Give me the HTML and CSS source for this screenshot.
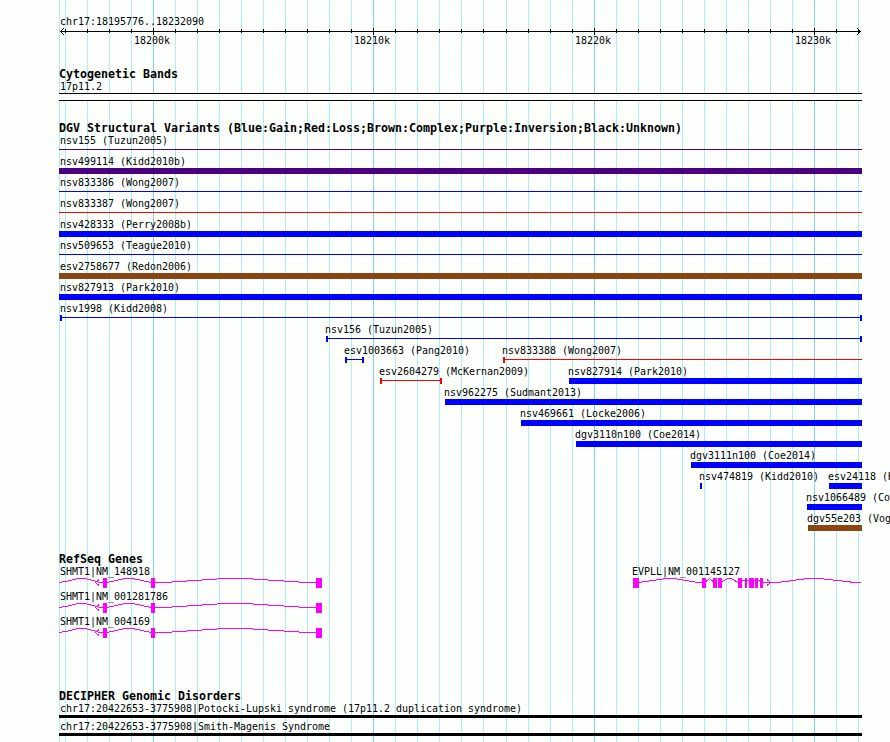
FILE: index.html
```html
<!DOCTYPE html>
<html lang="en">
<head>
  <meta charset="UTF-8" />
  <title>chr17:18195776..18232090</title>
  <link rel="stylesheet" href="styles.css">
</head>
<body>
  <main class="browser">
    <svg class="grid" viewBox="59 0 803 742">
      <path class="minor" d="M59.5 0V742M65.5 0V742M87.5 0V742M109.5 0V742M131.5 0V742M175.5 0V742M197.5 0V742M219.5 0V742M241.5 0V742M263.5 0V742M285.5 0V742M307.5 0V742M329.5 0V742M351.5 0V742M395.5 0V742M417.5 0V742M439.5 0V742M461.5 0V742M483.5 0V742M506.5 0V742M528.5 0V742M550.5 0V742M572.5 0V742M616.5 0V742M638.5 0V742M660.5 0V742M682.5 0V742M704.5 0V742M726.5 0V742M748.5 0V742M770.5 0V742M792.5 0V742M836.5 0V742M858.5 0V742" />
      <path class="major" d="M153.5 0V742M373.5 0V742M594.5 0V742M814.5 0V742" />
    </svg>

    <header class="ruler">
      <div class="label full">chr17:18195776..18232090</div>
      <svg class="axis" viewBox="59 28 803 8">
        <path d="M60 31.5H861M65.5 29V33M87.5 29V33M109.5 29V33M131.5 29V33M153.5 28V35M175.5 29V33M197.5 29V33M219.5 29V33M241.5 29V33M263.5 29V33M285.5 29V33M307.5 29V33M329.5 29V33M351.5 29V33M373.5 28V35M395.5 29V33M417.5 29V33M439.5 29V33M461.5 29V33M483.5 29V33M506.5 29V33M528.5 29V33M550.5 29V33M572.5 29V33M594.5 28V35M616.5 29V33M638.5 29V33M660.5 29V33M682.5 29V33M704.5 29V33M726.5 29V33M748.5 29V33M770.5 29V33M792.5 29V33M814.5 28V35M836.5 29V33M858.5 29V33" />
        <path d="M64 28L60.5 31.5L64 35M857 28L860.5 31.5L857 35" />
      </svg>
      <div class="ticks">
        <span class="label" style="--x:76px">18200k</span>
        <span class="label" style="--x:296px">18210k</span>
        <span class="label" style="--x:517px">18220k</span>
        <span class="label" style="--x:737px">18230k</span>
      </div>
    </header>

    <section class="track bands">
      <h2>Cytogenetic Bands</h2>
      <div class="label full">17p11.2</div>
      <div class="band"></div>
    </section>

    <section class="track variants">
      <h2>DGV Structural Variants (Blue:Gain;Red:Loss;Brown:Complex;Purple:Inversion;Black:Unknown)</h2>
      <div class="row"><div class="feature thin inversion" style="--x:0px;--w:803px"><span class="label full">nsv155 (Tuzun2005)</span></div></div>
      <div class="row"><div class="feature inversion" style="--x:0px;--w:803px"><span class="label full">nsv499114 (Kidd2010b)</span></div></div>
      <div class="row"><div class="feature thin gain" style="--x:0px;--w:803px"><span class="label full">nsv833386 (Wong2007)</span></div></div>
      <div class="row"><div class="feature thin loss" style="--x:0px;--w:803px"><span class="label full">nsv833387 (Wong2007)</span></div></div>
      <div class="row"><div class="feature gain" style="--x:0px;--w:803px"><span class="label full">nsv428333 (Perry2008b)</span></div></div>
      <div class="row"><div class="feature thin gain" style="--x:0px;--w:803px"><span class="label full">nsv509653 (Teague2010)</span></div></div>
      <div class="row"><div class="feature complex" style="--x:0px;--w:803px"><span class="label full">esv2758677 (Redon2006)</span></div></div>
      <div class="row"><div class="feature gain" style="--x:0px;--w:803px"><span class="label full">nsv827913 (Park2010)</span></div></div>
      <div class="row"><div class="feature thin cap-l cap-r gain" style="--x:1px;--w:802px"><span class="label flush">nsv1998 (Kidd2008)</span></div></div>
      <div class="row"><div class="feature thin cap-l cap-r gain" style="--x:267px;--w:536px"><span class="label">nsv156 (Tuzun2005)</span></div></div>
      <div class="row">
        <div class="feature thin cap-l cap-r gain" style="--x:286px;--w:19px"><span class="label">esv1003663 (Pang2010)</span></div>
        <div class="feature thin cap-l loss" style="--x:444px;--w:359px"><span class="label">nsv833388 (Wong2007)</span></div>
      </div>
      <div class="row">
        <div class="feature thin cap-l cap-r loss" style="--x:321px;--w:62px"><span class="label">esv2604279 (McKernan2009)</span></div>
        <div class="feature gain" style="--x:510px;--w:293px"><span class="label">nsv827914 (Park2010)</span></div>
      </div>
      <div class="row"><div class="feature gain" style="--x:386px;--w:417px"><span class="label">nsv962275 (Sudmant2013)</span></div></div>
      <div class="row"><div class="feature gain" style="--x:462px;--w:341px"><span class="label">nsv469661 (Locke2006)</span></div></div>
      <div class="row"><div class="feature gain" style="--x:517px;--w:286px"><span class="label">dgv3110n100 (Coe2014)</span></div></div>
      <div class="row"><div class="feature gain" style="--x:632px;--w:171px"><span class="label">dgv3111n100 (Coe2014)</span></div></div>
      <div class="row">
        <div class="feature gain" style="--x:641px;--w:2px"><span class="label">nsv474819 (Kidd2010)</span></div>
        <div class="feature gain" style="--x:770px;--w:33px"><span class="label">esv24118 (Kidd2008)</span></div>
      </div>
      <div class="row"><div class="feature gain" style="--x:748px;--w:55px"><span class="label">nsv1066489 (Coe2014)</span></div></div>
      <div class="row"><div class="feature complex" style="--x:749px;--w:54px"><span class="label">dgv55e203 (Vogler2010)</span></div></div>
    </section>

    <section class="track genes">
      <h2>RefSeq Genes</h2>
      <div class="row gene">
        <div class="names">
          <span class="label" style="--x:2px">SHMT1|NM_148918</span>
          <span class="label" style="--x:574px">EVPLL|NM_001145127</span>
        </div>
        <svg viewBox="59 0 803 10">
          <g id="shmt1">
            <path class="intron" d="M59 4.5L66 3.4L78 .5H85L97 3.4L99 4.5H103M107 4.5L125 .5H133L151 4.5M155 4.5H164L225 .5H245L307 4.5H316M99 1.5L95.5 4.5L99 7.5" />
            <path class="exon" d="M103 0h4v10h-4zM151 0h4v10h-4zM316 0h6v10h-6z" />
          </g>
          <path class="intron" d="M639 4.5L666 .5H674L698 4.5H702M706 3.5L709.5 .5L713 3.5M722 3.5L728 .5H731L738 4.5M742 2.5H763M763 4.5H777L808 .5H819L855 4.5H861M767 1.5L770.5 4.5L767 7.5" />
          <path class="exon" d="M633 0h6v10h-6zM702 0h4v10h-4zM713 0h4v10h-4zM718 0h4v10h-4zM738 0h4v10h-4zM745 0h2v10h-2zM749 0h5v10h-5zM755 0h3v10h-3zM760 0h3v10h-3z" />
        </svg>
      </div>
      <div class="row gene">
        <div class="names"><span class="label" style="--x:2px">SHMT1|NM_001281786</span></div>
        <svg viewBox="59 0 803 10"><use href="#shmt1" /></svg>
      </div>
      <div class="row gene">
        <div class="names"><span class="label" style="--x:2px">SHMT1|NM_004169</span></div>
        <svg viewBox="59 0 803 10"><use href="#shmt1" /></svg>
      </div>
    </section>

    <section class="track disorders">
      <h2>DECIPHER Genomic Disorders</h2>
      <div class="disorder"><span class="label full">chr17:20422653-3775908|Potocki-Lupski syndrome (17p11.2 duplication syndrome)</span></div>
      <div class="disorder"><span class="label full">chr17:20422653-3775908|Smith-Magenis Syndrome</span></div>
    </section>
  </main>
</body>
</html>
```
FILE: styles.css
```css
body {
  margin: 0;
  height: 742px;
  overflow: hidden;
  background: #fcfffc;
  color: #000;
  font-family: "DejaVu Sans Mono", monospace;
}
.browser {
  position: relative;
  width: 803px;
  height: 742px;
  margin-left: 59px;
}
svg {
  display: block;
  width: 100%;
  fill: none;
  overflow: visible;
  shape-rendering: crispEdges;
}
/* grid lines lie behind every track */
.grid {
  position: absolute;
  inset: 0;
  height: 742px;
  z-index: -1;
}
.minor { stroke: #afeeee; }
.major { stroke: #87ceeb; }

.label {
  display: block;
  width: max-content;
  height: 15px;
  margin-left: -1px;
  font-size: 11px;
  line-height: 17px;
  white-space: pre;
  transform: scaleX(0.906);
  transform-origin: 0 0;
}
.label.full { margin-left: 1px; }
.label.flush { margin-left: 0; }
h2 {
  width: max-content;
  height: 11px;
  margin: 0;
  font-size: 11.63px;
  font-weight: bold;
  line-height: 14px;
  white-space: pre;
}

.ruler { padding-top: 13px; }
.axis {
  height: 8px;
  stroke: #000;
}
.ticks, .names, .row { display: grid; }
.ticks .label, .names .label {
  grid-area: 1 / 1;
  margin-left: calc(var(--x) - 1px);
}
.ticks .label {
  height: 9px;
  line-height: 9px;
}

.bands { margin-top: 22px; }
.band {
  box-sizing: border-box;
  height: 8px;
  border: solid #000;
  border-width: 1px 0;
  background: #fcfffc;
}

.variants { margin-top: 20px; }
.feature {
  grid-area: 1 / 1;
  width: var(--w);
  height: 21px;
  margin-left: var(--x);
}
.feature::after {
  content: "";
  display: block;
  box-sizing: border-box;
  height: 6px;
  border: 0 solid var(--color);
  background: var(--color);
}
.thin::after {
  background: linear-gradient(var(--color), var(--color)) 0 2px / 100% 1px no-repeat;
}
.cap-l::after { border-left-width: 2px; }
.cap-r::after { border-right-width: 2px; }
.gain { --color: #0000ff; }
.loss { --color: #ff0000; }
.complex { --color: #8b4513; }
.inversion { --color: #4b0082; }

.genes { margin-top: 21px; }
.gene svg { height: 10px; }
.intron { stroke: #ff00ff; }
.exon { fill: #ff00ff; }

.disorders { margin-top: 51px; }
.disorder {
  box-sizing: border-box;
  height: 18px;
  border-bottom: 3px solid #000;
}
```
